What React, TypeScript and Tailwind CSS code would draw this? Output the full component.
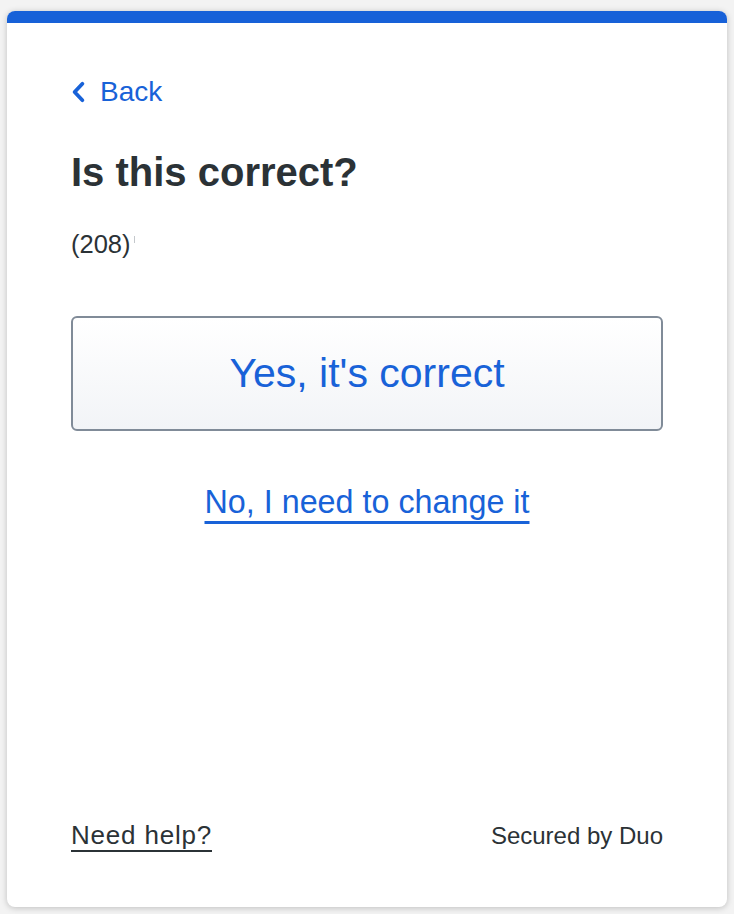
import React from "react";

export default function App() {
  return (
    <div
      className="min-h-screen bg-[#f3f3f3] pt-[11px] pl-[7px]"
      style={{ fontFamily: '"Liberation Sans", Arial, Helvetica, sans-serif' }}
    >
      <div className="w-[720px] h-[896px] bg-white rounded-[8px] shadow-[0_1px_6px_rgba(0,0,0,0.22)] overflow-hidden flex flex-col">
        <div className="h-[12px] bg-[#1761d8] shrink-0" />
        <div className="flex-1 flex flex-col px-16 pt-[53px] pb-[56px]">
          <a className="flex items-center h-[32px] text-[#1862d8] text-[28px] leading-[32px] cursor-pointer self-start">
            <svg width="16" height="22" viewBox="0 0 16 22" fill="none" className="shrink-0">
              <path
                d="M11.4 2.8 L3.6 11 L11.4 19.2"
                stroke="#1862d8"
                strokeWidth="3.8"
                strokeLinecap="round"
                strokeLinejoin="round"
              />
            </svg>
            <span className="ml-[13px]">Back</span>
          </a>

          <h1 className="mt-[40px] text-[40px] leading-[48px] font-bold text-[#2b3236]">
            Is this correct?
          </h1>

          <div className="mt-[32px] flex items-center h-[32px] text-[25.5px] leading-[32px] text-[#2b3236]">
            <span>(208)</span>
            <span className="ml-[3px] w-[1px] h-[7px] bg-[#c4c8cc] -mt-[10px]" />
          </div>

          <button className="mt-[56px] w-full h-[115px] rounded-[6px] border-2 border-[#808b98] bg-linear-to-b from-white to-[#f2f4f7] text-[41px] text-[#1862d8]">
            Yes, it's correct
          </button>

          <a className="mt-[51px] self-center text-[32.3px] leading-[40px] text-[#1862d8] underline decoration-[2.5px] underline-offset-[8px] cursor-pointer">
            No, I need to change it
          </a>

          <div className="flex-1" />

          <div className="flex justify-between items-baseline h-[32px] text-[24px] leading-[32px] text-[#2b3236]">
            <a className="text-[26px] underline decoration-2 underline-offset-[6px] tracking-[0.8px] cursor-pointer">Need help?</a>
            <span>Secured by Duo</span>
          </div>
        </div>
      </div>
    </div>
  );
}
